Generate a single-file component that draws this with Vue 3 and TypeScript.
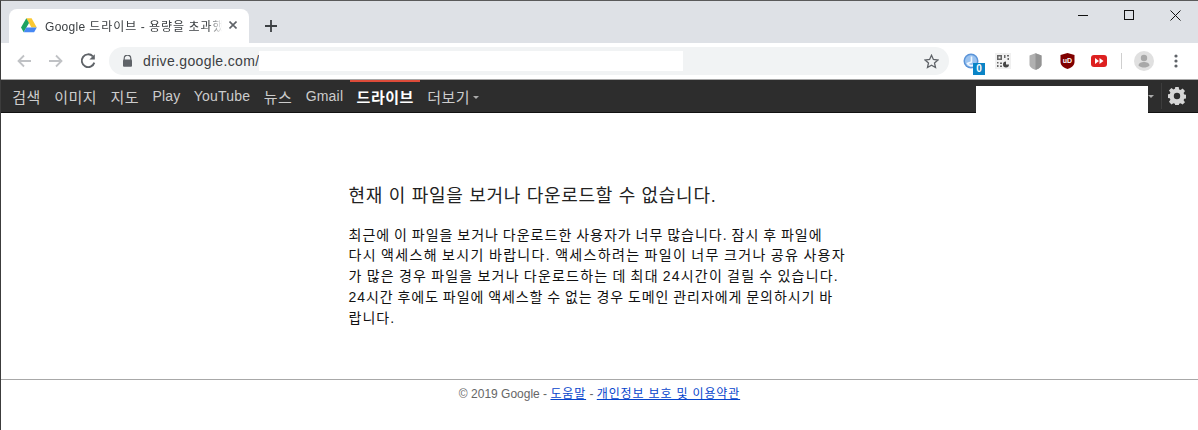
<script setup lang="ts">
const navItems: { label: string; active?: boolean; ko: boolean }[] = [
  { label: '검색', ko: true }, { label: '이미지', ko: true }, { label: '지도', ko: true }, { label: 'Play', ko: false },
  { label: 'YouTube', ko: false }, { label: '뉴스', ko: true }, { label: 'Gmail', ko: false }, { label: '드라이브', active: true, ko: true },
]
const bodyLines: { text: string; fit: string }[] = [
  { text: '최근에 이 파일을 보거나 다운로드한 사용자가 너무 많습니다. 잠시 후 파일에', fit: 'fit-0' },
  { text: '다시 액세스해 보시기 바랍니다. 액세스하려는 파일이 너무 크거나 공유 사용자', fit: 'fit-2' },
  { text: '가 많은 경우 파일을 보거나 다운로드하는 데 최대 24시간이 걸릴 수 있습니다.', fit: 'fit-1' },
  { text: '24시간 후에도 파일에 액세스할 수 없는 경우 도메인 관리자에게 문의하시기 바', fit: 'fit-n' },
  { text: '랍니다.', fit: 'fit-0' },
]
</script>

<template>
  <div class="window">
    <div class="tabstrip">
      <div class="tab">
        <svg class="favicon" width="16" height="15" viewBox="0 0 16 15">
          <path d="M5.3 0.3h5.3l5.2 9.2h-5.3z" fill="#fbc934"/>
          <path d="M5.3 0.3l2.7 4.6-5.300 9.300L0 9.500z" fill="#1ea362"/>
          <path d="M5.3 9.500h10.500l-2.700 4.700H2.700z" fill="#4688f4"/>
        </svg>
        <span class="tab-title"><span class="tab-en">Google </span><span class="ko">드라이브 - 용량을 초과했습니다</span></span>
        <svg class="tab-close" width="8" height="8" viewBox="0 0 8 8"><path d="M0.5 0.5l7 7M7.5 0.5l-7 7" stroke="#5f6368" stroke-width="1.6"/></svg>
      </div>
      <svg class="plus" width="12" height="12" viewBox="0 0 12 12"><path d="M6 0v12M0 6h12" stroke="#3c4043" stroke-width="1.8"/></svg>
      <div class="win-controls">
        <svg width="11" height="11" viewBox="0 0 11 11"><path d="M0 5.500h10" stroke="#111" fill="none"/></svg>
        <svg width="11" height="11" viewBox="0 0 11 11"><rect x="0.5" y="0.5" width="9" height="9" stroke="#111" fill="none"/></svg>
        <svg width="11" height="11" viewBox="0 0 11 11"><path d="M0.5 0.5l10 10M10.500 0.5l-10 10" stroke="#111" fill="none"/></svg>
      </div>
    </div>

    <div class="toolbar">
      <svg class="tb-icon" width="16" height="16" viewBox="0 0 16 16"><path d="M15 8H2M8 2.500L2.500 8l5.500 5.500" stroke="#c0c2c5" stroke-width="1.800" fill="none"/></svg>
      <svg class="tb-icon" width="16" height="16" viewBox="0 0 16 16"><path d="M1 8h13M8 2.500L13.500 8 8 13.500" stroke="#c0c2c5" stroke-width="1.800" fill="none"/></svg>
      <svg class="tb-icon" width="16" height="16" viewBox="0 0 16 16"><path d="M12.900 3.400A6.400 6.400 0 1 0 14.300 9.600" stroke="#5f6368" stroke-width="1.900" fill="none"/><path d="M9.400 6.600H14.800V1.200z" fill="#5f6368"/></svg>
      <div class="omnibox">
        <svg width="9" height="12" viewBox="0 0 9 12"><path d="M1.200 5V3.400a3.300 3.300 0 0 1 6.600 0V5" stroke="#5f6368" stroke-width="1.200" fill="none"/><rect y="4.600" width="9" height="7.200" rx="1" fill="#5f6368"/></svg>
        <span class="url">drive.google.com/</span>
        <div class="url-mask"></div>
        <svg class="star" width="15" height="15" viewBox="0 0 15 15"><path d="M7.500 1.300l1.900 4.200 4.500.5-3.400 3 1 4.500-4-2.300-4 2.300 1-4.500-3.400-3 4.500-.5z" stroke="#5f6368" stroke-width="1.300" fill="none"/></svg>
      </div>
      <div class="extensions">
        <div class="ext">
          <svg width="16" height="16" viewBox="0 0 16 16"><circle cx="8" cy="8" r="7.500" fill="#5b94d8"/><circle cx="8" cy="8" r="6" fill="#9cc4f0"/><path d="M8.500 3.500v5.500l-4 1.500c1 2 4 3 6 1.500" stroke="#f2f8ff" stroke-width="1.600" fill="none"/></svg>
          <span class="badge">0</span>
        </div>
        <div class="ext">
          <svg width="16" height="16" viewBox="0 0 16 16"><rect width="16" height="16" fill="#f0f0f0"/><path d="M2 2h5v5H2zM3.500 3.500v2h2v-2zM9 2h1.500v3H9zM12 2h2v1.500h-2zM12.500 5H14v2h-1.500zM2 9h1.500v1.500H2zM5 9.500h2V11H5zM2 12h1.500v2H2zM5 12.500h2V14H5z" fill="#666" fill-rule="evenodd"/><path d="M11 8.500a3 3 0 1 0 3 3h-3z" fill="#444"/></svg>
        </div>
        <div class="ext">
          <svg width="13" height="17" viewBox="0 0 13 17"><path d="M6.500 0.200l6 2.300v9c0 2.500-3 4.500-6 5.300-3-.8-6-2.800-6-5.300v-9z" fill="#b0b0b0"/><path d="M6.500 0.200l6 2.300v9c0 2.500-3 4.500-6 5.300z" fill="#939393"/></svg>
        </div>
        <div class="ext">
          <svg width="15" height="16" viewBox="0 0 15 16"><path d="M7.500 0l7 2v7c0 3.500-3.500 6-7 7-3.500-1-7-3.500-7-7V2z" fill="#800000"/><text x="7.500" y="10" text-anchor="middle" class="ublock">uD</text></svg>
        </div>
        <div class="ext">
          <svg width="16" height="12" viewBox="0 0 16 12"><rect width="16" height="12" rx="3" fill="#dd2020"/><path d="M4 3l4 3-4 3zM8.500 3l4 3-4 3z" fill="#fff"/></svg>
        </div>
      </div>
      <div class="tb-sep"></div>
      <svg class="avatar" width="20" height="20" viewBox="0 0 20 20"><circle cx="10" cy="10" r="10" fill="#e0e0e0"/><circle cx="10" cy="7" r="3.200" fill="#a8a8a8"/><path d="M4.500 14.500c0-2.500 3-3.500 5.500-3.500s5.500 1 5.500 3.500c-1.500 1.500-3.500 2-5.500 2s-4-.5-5.500-2z" fill="#a8a8a8"/></svg>
      <svg class="dots" width="4" height="14" viewBox="0 0 4 14"><circle cx="2" cy="2" r="1.600" fill="#5f6368"/><circle cx="2" cy="7" r="1.600" fill="#5f6368"/><circle cx="2" cy="12" r="1.600" fill="#5f6368"/></svg>
    </div>

    <nav class="gbar">
      <a v-for="item in navItems" :key="item.label" class="gb-item" :class="{ active: item.active, 'gb-ko': item.ko }">{{ item.label }}</a>
      <a class="gb-item gb-ko">더보기<i class="caret"></i></a>
      <div class="gb-right">
        <div class="acct-mask"></div>
        <i class="caret"></i>
        <div class="gb-sep"></div>
        <svg class="gear" width="18" height="18" viewBox="0 0 18 18">
          <path fill="#d6d6d6" fill-rule="evenodd" d="M7.300 0h3.400l.4 2.400 1.500.6 2-1.400 2.400 2.400-1.400 2 .6 1.500 2.400.4v3.400l-2.400.4-.6 1.500 1.400 2-2.400 2.400-2-1.400-1.500.6-.4 2.400H7.300l-.4-2.400-1.500-.6-2 1.400L1 14.800l1.400-2-.6-1.500-2.400-.4V7.300l2.400-.4.6-1.500-1.400-2L3.400 1l2 1.400 1.500-.6zM9 5.800a3.200 3.200 0 1 0 0 6.400 3.200 3.200 0 0 0 0-6.400z"/>
        </svg>
      </div>
    </nav>

    <main class="content">
      <div class="message">
        <h1>현재 이 파일을 보거나 다운로드할 수 없습니다.</h1>
        <p><span v-for="line in bodyLines" :key="line.text" class="line" :class="line.fit">{{ line.text }}</span></p>
      </div>
    </main>

    <footer class="footer">
      © 2019 Google - <a>도움말</a> - <a>개인정보 보호 및 이용약관</a>
    </footer>
  </div>
</template>

<style>
html, body { margin: 0; background: #fff; overflow: hidden; }
</style>

<style scoped>
.window {
  width: 1198px;
  height: 430px;
  box-sizing: border-box;
  border-left: 1px solid #3c3c3c;
  border-top: 1px solid #5a5a5a;
  font-family: "Liberation Sans", "Noto Sans CJK KR", sans-serif;
  display: flex;
  flex-direction: column;
  overflow: hidden;
  background: #fff;
}
.tabstrip {
  height: 42px;
  background: #dee1e6;
  display: flex;
  align-items: flex-end;
  flex: none;
}
.tab {
  width: 240px;
  height: 34px;
  margin-left: 8px;
  background: #fff;
  border-radius: 8px 8px 0 0;
  display: flex;
  align-items: center;
  padding: 0 0 2px 12px;
  box-sizing: border-box;
  flex: none;
}
.favicon { flex: none; margin-right: 8px; }
.tab-title {
  font-size: 12px;
  color: #3c4043;
  width: 177px;
  white-space: nowrap;
  overflow: hidden;
  flex: none;
  -webkit-mask-image: linear-gradient(to right, #000 165px, transparent);
  mask-image: linear-gradient(to right, #000 165px, transparent);
}
.tab-en { letter-spacing: 0.3px; }
.ko { letter-spacing: 1px; word-spacing: -1px; }
.tab-close { margin-left: 7px; flex: none; }
.plus { margin: 0 0 11px 16px; flex: none; }
.win-controls {
  margin-left: auto;
  align-self: flex-start;
  display: flex;
  gap: 35px;
  padding: 9px 17px 0 0;
}
.toolbar {
  height: 36px;
  background: #fff;
  border-bottom: 1px solid #a8a8a8;
  display: flex;
  align-items: center;
  flex: none;
}
.tb-icon { flex: none; margin-left: 15px; }
.tb-icon:nth-child(2) { margin-left: 16px; }
.tb-icon:nth-child(3) { margin-left: 16px; }
.omnibox {
  width: 840px;
  height: 28px;
  margin-left: 13px;
  border-radius: 14px;
  background: #f1f3f4;
  display: flex;
  align-items: center;
  padding: 0 10px 0 14px;
  box-sizing: border-box;
  flex: none;
}
.url { font-size: 14px; letter-spacing: 0.35px; color: #3c4043; margin-left: 11px; white-space: nowrap; width: 116px; flex: none; }
.url-mask { width: 424px; height: 20px; background: #fff; flex: none; }
.star { margin-left: auto; flex: none; }
.extensions { display: flex; align-items: center; margin-left: 6px; }
.ext { width: 32px; height: 24px; display: flex; align-items: center; justify-content: center; position: relative; }
.badge {
  position: absolute;
  right: 2px;
  bottom: -2px;
  width: 12px;
  height: 12px;
  background: #0a84c6;
  color: #fff;
  font-size: 10px;
  font-weight: 700;
  line-height: 12px;
  text-align: center;
}
.ublock { font-size: 7px; font-weight: 700; fill: #fff; font-family: "Liberation Sans", sans-serif; }
.tb-sep { width: 1px; height: 16px; background: #cfcfcf; margin-left: 6px; flex: none; }
.avatar { margin-left: 12px; flex: none; }
.dots { margin-left: 20px; flex: none; }
.gbar {
  height: 33px;
  background: #2d2d2d;
  border-bottom: 1px solid #111;
  display: flex;
  align-items: stretch;
  box-sizing: border-box;
  padding-left: 4.500px;
  flex: none;
}
.gb-item {
  font-size: 14px;
  letter-spacing: 0.2px;
  color: #cccccc;
  padding: 0 6.700px 2px;
  display: flex;
  align-items: center;
  white-space: nowrap;
  border-top: 2px solid transparent;
  box-sizing: border-box;
}
.gb-ko { font-size: 15px; letter-spacing: 0.5px; }
.gb-item.active { color: #fff; font-weight: 700; border-top-color: #dd4b39; }
.caret {
  width: 0;
  height: 0;
  border-left: 3px solid transparent;
  border-right: 3px solid transparent;
  border-top: 3px solid #aaa;
  margin-left: 3px;
  margin-top: 2px;
}
.gb-right { margin-left: auto; display: flex; align-items: center; }
.acct-mask { width: 172px; height: 27px; background: #fff; align-self: flex-end; margin-bottom: -1px; }
.gb-right .caret { margin-left: 0; margin-top: 0; }
.gb-sep { width: 1px; height: 26px; background: #3d3d3d; margin-left: 7px; }
.gear { margin: 0 12px 0 6px; flex: none; }
.content {
  flex: 1;
  display: flex;
  justify-content: center;
  background: #fff;
  min-height: 0;
}
.message { width: 500px; margin-left: -2px; padding-top: 71px; box-sizing: border-box; color: #222; }
h1 { font-size: 18px; font-weight: 400; line-height: 24px; letter-spacing: 0.7px; margin: 0 0 16.500px; color: #222; white-space: nowrap; }
p { font-size: 14px; line-height: 20.800px; letter-spacing: 1px; word-spacing: -1px; margin: 0; color: #111; }
.line { display: block; white-space: nowrap; }
.fit-1 { letter-spacing: 1.200px; }
.fit-2 { letter-spacing: 1.320px; }
.fit-n { letter-spacing: 0.950px; }
.footer {
  height: 51px;
  flex: none;
  border-top: 1px solid #a8a8a8;
  box-sizing: border-box;
  text-align: center;
  font-size: 12px;
  color: #666;
  padding-top: 5px;
  line-height: 18px;
}
.footer a { color: #0645cc; text-decoration: underline; letter-spacing: 0.850px; }
</style>
